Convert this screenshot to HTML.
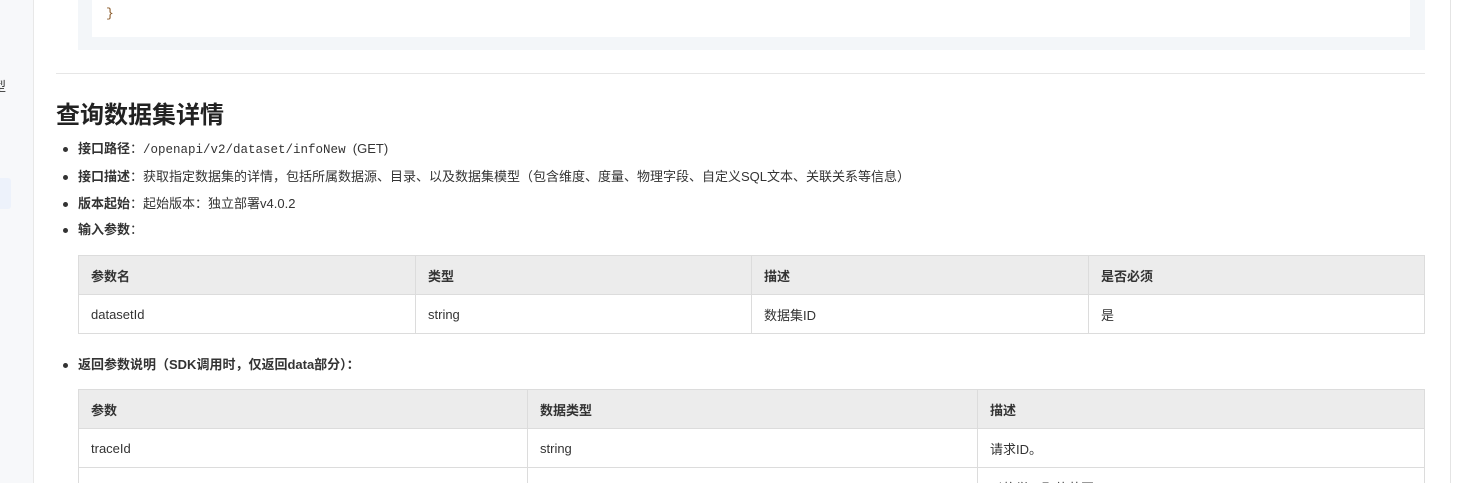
<!DOCTYPE html>
<html><head><meta charset="utf-8"><style>
*{margin:0;padding:0;box-sizing:border-box}
html,body{width:1466px;height:483px;overflow:hidden}
body{background:#fff;font-family:"Liberation Sans","Noto Sans CJK SC",sans-serif;color:#333;font-size:13px;position:relative}
.side{position:absolute;left:0;top:0;width:34px;height:483px;background:#f7f8fa;border-right:1px solid #e8e8e8;overflow:hidden}
.hl{position:absolute;left:0;top:178px;width:11px;height:31px;background:#edf2fb;border-radius:0 3px 3px 0}
.rline{position:absolute;left:1450px;top:0;width:1px;height:483px;background:#e4e4e4}
.code{position:absolute;left:78px;top:0;width:1347px;height:50px;background:#f3f6f9}
.codein{position:absolute;left:14px;top:0;width:1318px;height:37px;background:#fff;font-family:"Liberation Mono",monospace;color:#8a5a2a;padding:6px 0 0 14px;font-size:13px}
.hr{position:absolute;left:56px;top:73px;width:1369px;height:1px;background:#e6e6e6}
h2{position:absolute;left:56px;top:95px;font-size:24px;font-weight:bold;color:#222}
.li{position:absolute;left:78px;font-size:13px;line-height:16px}
.li:before{content:"";position:absolute;left:-15px;top:6px;width:5px;height:5px;border-radius:50%;background:#333}
code{font-family:"Liberation Mono",monospace;font-size:12.5px}
table{position:absolute;left:78px;border-collapse:collapse;width:1347px;font-size:13px}
td,th{border:1px solid #dcdcdc;text-align:left;padding:0 12px;height:39px;font-weight:normal}
th{background:#ececec;font-weight:bold}
</style></head><body>
<div class="side"><div class="hl"></div><div style="position:absolute;left:-7px;top:76px;font-size:13px">型</div></div>
<div class="rline"></div>
<div class="code"><div class="codein">}</div></div>
<div class="hr"></div>
<h2>查询数据集详情</h2>
<div class="li" style="top:141px"><b>接口路径</b>：<code>/openapi/v2/dataset/infoNew</code>&nbsp; (GET)</div>
<div class="li" style="top:169px"><b>接口描述</b>：获取指定数据集的详情，包括所属数据源、目录、以及数据集模型（包含维度、度量、物理字段、自定义SQL文本、关联关系等信息）</div>
<div class="li" style="top:196px"><b>版本起始</b>：起始版本：独立部署v4.0.2</div>
<div class="li" style="top:222px"><b>输入参数</b>：</div>
<table style="top:255px"><tr><th style="width:337px">参数名</th><th style="width:336px">类型</th><th style="width:337px">描述</th><th>是否必须</th></tr>
<tr><td>datasetId</td><td>string</td><td>数据集ID</td><td>是</td></tr></table>
<div class="li" style="top:357px"><b>返回参数说明（SDK调用时，仅返回data部分）：</b></div>
<table style="top:389px"><tr><th style="width:449px">参数</th><th style="width:450px">数据类型</th><th>描述</th></tr>
<tr><td>traceId</td><td>string</td><td>请求ID。</td></tr>
<tr><td></td><td></td><td style="vertical-align:top;padding-top:10px">以枚举，取值范围</td></tr></table>
</body></html>
